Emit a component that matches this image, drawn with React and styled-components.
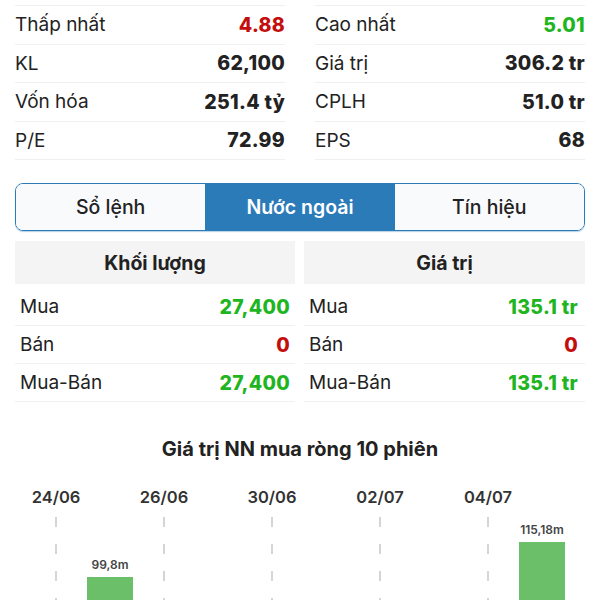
import React from 'react';
import styled, { createGlobalStyle } from 'styled-components';

const GlobalStyle = createGlobalStyle`
  body {
    margin: 0;
    background: #fff;
    font-family: Inter, "Liberation Sans", sans-serif;
    color: #222;
  }
`;

const Page = styled.div`
  width: 600px;
  height: 600px;
  overflow: hidden;
  box-sizing: border-box;
  padding-top: 5px;
`;

const StatsGrid = styled.div`
  display: grid;
  grid-template-columns: 270px 270px;
  column-gap: 30px;
  padding: 0 15px;
`;

const StatsColumn = styled.div`
  border-top: 1px solid #f0f0f0;
`;

const StatRow = styled.div`
  display: flex;
  justify-content: space-between;
  align-items: center;
  height: 38.5px;
  box-sizing: border-box;
  border-bottom: 1px solid #f0f0f0;
  font-size: 19px;
`;

const Label = styled.span`
  color: #222;
`;

const Value = styled.span`
  font-weight: 800;
  font-size: 19.5px;
  letter-spacing: 0.3px;
  color: ${(p) => (p.$tone === 'up' ? '#1fb51f' : p.$tone === 'down' ? '#c40d0d' : '#222')};
`;

const Tabs = styled.div`
  display: flex;
  margin: 23px 15px 0;
  height: 48px;
  box-sizing: border-box;
  border: 1.5px solid #2b7bb9;
  border-radius: 8px;
  overflow: hidden;
  box-shadow: 0 1px 1px rgba(43, 123, 185, 0.35);
`;

const Tab = styled.div`
  flex: 1;
  display: flex;
  align-items: center;
  justify-content: center;
  font-size: 19.5px;
  font-weight: ${(p) => (p.$active ? 600 : 500)};
  color: ${(p) => (p.$active ? '#fff' : '#222')};
  background: ${(p) => (p.$active ? '#2b7bb9' : '#f8fafc')};
`;

const ForeignGrid = styled.div`
  display: grid;
  grid-template-columns: 280px 281px;
  column-gap: 9px;
  padding: 10px 15px 0;
`;

const ForeignHeader = styled.div`
  height: 43px;
  display: flex;
  align-items: center;
  justify-content: center;
  background: #f4f4f4;
  font-size: 19.5px;
  font-weight: 700;
  margin-bottom: 4px;
`;

const ForeignRow = styled.div`
  display: flex;
  justify-content: space-between;
  align-items: center;
  height: 38px;
  box-sizing: border-box;
  padding: 0 ${(p) => (p.$right ? 7 : 5)}px 0 5px;
  border-bottom: 1px solid #f0f0f0;
  font-size: 19px;
`;

const ChartTitle = styled.div`
  margin-top: 35px;
  text-align: center;
  font-size: 20px;
  font-weight: 700;
  color: #222;
`;

const ChartWrap = styled.div`
  margin-top: 19px;
  height: 130px;
`;

const stats = [
  [
    ['Thấp nhất', '4.88', 'down'],
    ['KL', '62,100'],
    ['Vốn hóa', '251.4 tỷ'],
    ['P/E', '72.99'],
  ],
  [
    ['Cao nhất', '5.01', 'up'],
    ['Giá trị', '306.2 tr'],
    ['CPLH', '51.0 tr'],
    ['EPS', '68'],
  ],
];

const foreign = [
  {
    title: 'Khối lượng',
    rows: [
      ['Mua', '27,400', 'up'],
      ['Bán', '0', 'down'],
      ['Mua-Bán', '27,400', 'up'],
    ],
  },
  {
    title: 'Giá trị',
    rows: [
      ['Mua', '135.1 tr', 'up'],
      ['Bán', '0', 'down'],
      ['Mua-Bán', '135.1 tr', 'up'],
    ],
  },
];

const sessions = [
  { date: '24/06' },
  { date: '25/06', value: '99,8m', top: 97 },
  { date: '26/06' },
  { date: '27/06' },
  { date: '30/06' },
  { date: '01/07' },
  { date: '02/07' },
  { date: '03/07' },
  { date: '04/07' },
  { date: '05/07', value: '115,18m', top: 62 },
];

const NetChart = () => (
  <svg width="600" height="130" viewBox="0 0 600 130">
    {sessions.map((s, i) => {
      const cx = 56 + i * 54;
      const labelled = i % 2 === 0;
      return (
        <g key={s.date}>
          {labelled && (
            <>
              <text
                x={cx}
                y={23}
                textAnchor="middle"
                fontSize="16.5"
                fontWeight="600"
                fill="#333"
                fontFamily="Inter, 'Liberation Sans', sans-serif"
              >
                {s.date}
              </text>
              <line
                x1={cx}
                y1={37}
                x2={cx}
                y2={130}
                stroke="#c8c8c8"
                strokeWidth="1.5"
                strokeDasharray="10 17"
              />
            </>
          )}
          {s.value && (
            <>
              <text
                x={cx}
                y={s.top - 8}
                textAnchor="middle"
                fontSize="12"
                fontWeight="600"
                fill="#444"
                fontFamily="Inter, 'Liberation Sans', sans-serif"
              >
                {s.value}
              </text>
              <rect x={cx - 23} y={s.top} width="46" height={130 - s.top} fill="#6cbf69" />
            </>
          )}
        </g>
      );
    })}
  </svg>
);

const App = () => {
  return (
    <Page>
      <GlobalStyle />
      <StatsGrid>
        {stats.map((col, ci) => (
          <StatsColumn key={ci}>
            {col.map(([label, value, tone]) => (
              <StatRow key={label}>
                <Label>{label}</Label>
                <Value $tone={tone}>{value}</Value>
              </StatRow>
            ))}
          </StatsColumn>
        ))}
      </StatsGrid>

      <Tabs>
        <Tab>Sổ lệnh</Tab>
        <Tab $active>Nước ngoài</Tab>
        <Tab>Tín hiệu</Tab>
      </Tabs>

      <ForeignGrid>
        {foreign.map((block, bi) => (
          <div key={block.title}>
            <ForeignHeader>{block.title}</ForeignHeader>
            {block.rows.map(([label, value, tone]) => (
              <ForeignRow key={label} $right={bi === 1}>
                <Label>{label}</Label>
                <Value $tone={tone}>{value}</Value>
              </ForeignRow>
            ))}
          </div>
        ))}
      </ForeignGrid>

      <ChartTitle>Giá trị NN mua ròng 10 phiên</ChartTitle>
      <ChartWrap>
        <NetChart />
      </ChartWrap>
    </Page>
  );
};

export default App;
